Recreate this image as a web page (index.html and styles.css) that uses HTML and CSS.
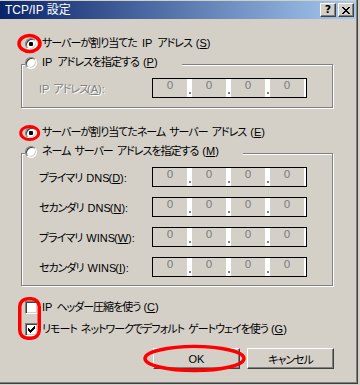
FILE: index.html
```html
<!DOCTYPE HTML>
<html lang="ja">
  <head>
    <title>TCP/IP 設定</title>
    <meta charset="utf-8">
    <link rel="stylesheet" href="styles.css">
  </head>
  <body>

  <div class="window">
    <div class="titlebar">
      <span class="title">TCP/IP 設定</span>
      <div class="caption-buttons">
        <span class="cbtn help">?</span>
        <span class="cbtn">
          <svg width="8" height="7" viewBox="0 0 8 7"><path fill="#000" d="M0 0h2v1H0zM6 0h2v1H6zM1 1h2v1H1zM5 1h2v1H5zM2 2h4v1H2zM3 3h2v1H3zM2 4h4v1H2zM1 5h2v1H1zM5 5h2v1H5zM0 6h2v1H0zM6 6h2v1H6z"/></svg>
        </span>
      </div>
    </div>

    <div class="content">
      <label class="option first"><span class="radio checked"></span>サーバーが割り当てた <span class="lat">IP</span> アドレス<span class="key">(<u>S</u>)</span></label>

      <fieldset class="group">
        <legend><label class="option"><span class="radio"></span><span class="lat">IP</span> アドレスを指定する<span class="key">(<u>P</u>)</span></label></legend>
        <div class="group-inner one">
          <div class="field-row">
            <span class="field-label disabled"><span class="lat">IP</span> アドレス<span class="key">(<u>A</u>):</span></span>
            <div class="ip">
              <span class="seg">0</span><span class="gap"><i></i></span><span class="seg">0</span><span class="gap"><i></i></span><span class="seg">0</span><span class="gap"><i></i></span><span class="seg">0</span>
            </div>
          </div>
        </div>
      </fieldset>

      <label class="option spaced"><span class="radio checked"></span>サーバーが割り当てたネーム サーバー アドレス<span class="key">(<u>E</u>)</span></label>

      <fieldset class="group">
        <legend><label class="option"><span class="radio"></span>ネーム サーバー アドレスを指定する<span class="key">(<u>M</u>)</span></label></legend>
        <div class="group-inner two">
          <div class="field-row">
            <span class="field-label">プライマリ <span class="lat">DNS</span><span class="key">(<u>D</u>):</span></span>
            <div class="ip">
              <span class="seg">0</span><span class="gap"><i></i></span><span class="seg">0</span><span class="gap"><i></i></span><span class="seg">0</span><span class="gap"><i></i></span><span class="seg">0</span>
            </div>
          </div>
          <div class="field-row">
            <span class="field-label">セカンダリ <span class="lat">DNS</span><span class="key">(<u>N</u>):</span></span>
            <div class="ip">
              <span class="seg">0</span><span class="gap"><i></i></span><span class="seg">0</span><span class="gap"><i></i></span><span class="seg">0</span><span class="gap"><i></i></span><span class="seg">0</span>
            </div>
          </div>
          <div class="field-row">
            <span class="field-label">プライマリ <span class="lat">WINS</span><span class="key">(<u>W</u>):</span></span>
            <div class="ip">
              <span class="seg">0</span><span class="gap"><i></i></span><span class="seg">0</span><span class="gap"><i></i></span><span class="seg">0</span><span class="gap"><i></i></span><span class="seg">0</span>
            </div>
          </div>
          <div class="field-row">
            <span class="field-label">セカンダリ <span class="lat">WINS</span><span class="key">(<u>I</u>):</span></span>
            <div class="ip">
              <span class="seg">0</span><span class="gap"><i></i></span><span class="seg">0</span><span class="gap"><i></i></span><span class="seg">0</span><span class="gap"><i></i></span><span class="seg">0</span>
            </div>
          </div>
        </div>
      </fieldset>

      <div class="checks">
        <label class="option"><span class="checkbox"></span><span class="lat">IP</span> ヘッダー圧縮を使う<span class="key">(<u>C</u>)</span></label>
        <label class="option"><span class="checkbox"><svg width="7" height="7" viewBox="0 0 7 7"><path fill="#000" d="M6 0h1v1H6zM5 1h2v1H5zM0 2h1v1H0zM4 2h3v1H4zM0 3h2v1H0zM3 3h3v1H3zM0 4h5v1H0zM1 5h3v1H1zM2 6h1v1H2z"/></svg></span>リモート ネットワークでデフォルト ゲートウェイを使う<span class="key">(<u>G</u>)</span></label>
      </div>

      <div class="buttons">
        <span class="btn default"><span class="lat">OK</span></span>
        <span class="btn">キャンセル</span>
      </div>
    </div>

    <!-- red annotation marks drawn over the dialog -->
    <svg class="marks" width="358" height="384" viewBox="0 0 358 384">
      <g fill="none" stroke="#ff0000">
        <ellipse cx="29.5" cy="43.5" rx="10.5" ry="8" stroke-width="3.5"/>
        <ellipse cx="29.7" cy="133" rx="9" ry="6.5" stroke-width="3"/>
        <rect x="19.75" y="298.75" width="19.5" height="39.5" rx="8" stroke-width="3.5"/>
        <ellipse cx="194.5" cy="358.5" rx="49.5" ry="12" stroke-width="3.5"/>
      </g>
    </svg>
  </div>

  </body>
</html>
```

FILE: styles.css
```css
  body {
    margin: 0;
    padding: 0;
    background: #d4d0c8;
    font-family: "Liberation Sans", "Noto Sans CJK JP", sans-serif;
    font-size: 11px;
    color: #000;
    text-autospace: no-autospace;
  }

  .window {
    position: relative;
    width: 358px;
    height: 384px;
    box-sizing: border-box;
    padding-top: 1px;
    background: #d4d0c8;
    border-right: 1px solid #404040;
    border-bottom: 1px solid #404040;
    box-shadow: inset -1px -1px #808080;
    font-feature-settings: "palt";
    letter-spacing: -1px;
    word-spacing: 2px;
  }

  .titlebar {
    height: 18px;
    margin-right: 1px;
    padding: 0 2px 0 5px;
    display: flex;
    align-items: center;
    justify-content: space-between;
    background: linear-gradient(to right, #0a246a, #a6caf0);
    color: #fff;
    letter-spacing: 0;
    word-spacing: 0;
  }
  .title {
    font-size: 12px;
    line-height: 18px;
  }
  .caption-buttons {
    display: flex;
    gap: 2px;
  }
  .cbtn {
    width: 16px;
    height: 14px;
    box-sizing: border-box;
    display: flex;
    align-items: center;
    justify-content: center;
    background: #d4d0c8;
    border: 1px solid;
    border-color: #fff #404040 #404040 #fff;
    box-shadow: inset -1px -1px #808080;
  }
  .cbtn.help {
    color: #000;
    font: bold 11px "DejaVu Sans", sans-serif;
    line-height: 12px;
  }

  .content {
    width: 313px;
    padding-left: 21px;
  }

  .lat, .key {
    letter-spacing: 0;
  }
  .key {
    margin-left: -1px;
    font-family: "Liberation Sans", sans-serif;
    font-feature-settings: normal;
  }

  .option {
    display: flex;
    align-items: center;
    gap: 5px;
    height: 13px;
    line-height: 13px;
    margin-left: 4px;
    white-space: nowrap;
  }
  .option.first {
    margin-top: 18px;
  }
  .option.spaced {
    margin-top: 18px;
  }

  .radio {
    width: 12px;
    height: 12px;
    box-sizing: border-box;
    flex: none;
    display: flex;
    align-items: center;
    justify-content: center;
    border-radius: 50%;
    background: #fff;
    border: 1px solid;
    border-color: #808080 #fff #fff #808080;
    box-shadow: inset 1px 1px #404040, inset -1px -1px #d4d0c8;
  }
  .radio.checked::after {
    content: "";
    width: 4px;
    height: 4px;
    border-radius: 1px;
    background: #000;
  }

  .checkbox {
    width: 13px;
    height: 13px;
    box-sizing: border-box;
    flex: none;
    display: flex;
    align-items: center;
    justify-content: center;
    background: #fff;
    border: 1px solid;
    border-color: #808080 #fff #fff #808080;
    box-shadow: inset 1px 1px #404040, inset -1px -1px #d4d0c8;
  }

  .group {
    width: 312px;
    box-sizing: border-box;
    margin: 6px 0 0;
    padding: 0;
    border: 1px solid #808080;
    box-shadow: 1px 1px #fff, inset 1px 1px #fff;
  }
  .group legend {
    margin-left: 3px;
    padding: 0 24px 4px 0;
    background: #d4d0c8;
  }
  .group legend .option {
    margin-left: 0;
  }

  .group-inner.one {
    padding: 5px 0 9px 17px;
  }
  .group-inner.two {
    padding: 5px 0 8px 17px;
    display: flex;
    flex-direction: column;
    gap: 10px;
  }

  .field-row {
    display: flex;
    align-items: center;
    height: 20px;
  }
  .field-label {
    flex: 0 0 113px;
    white-space: nowrap;
  }
  .disabled {
    color: #808080;
    text-shadow: 1px 1px #fff;
  }

  .ip {
    width: 155px;
    height: 20px;
    box-sizing: border-box;
    display: flex;
    border: 1px solid #000;
    background: #fff;
    letter-spacing: 0;
  }
  .seg {
    width: 34px;
    background: #d4d0c8;
    color: #808080;
    font: 11px "DejaVu Sans", sans-serif;
    line-height: 14px;
    text-align: center;
  }
  .gap {
    width: 5px;
    display: flex;
    align-items: flex-end;
    justify-content: center;
    padding-bottom: 3px;
    box-sizing: border-box;
  }
  .gap i {
    width: 2px;
    height: 2px;
    background: #808080;
  }

  .checks {
    margin-top: 15px;
    display: flex;
    flex-direction: column;
    gap: 9px;
  }
  .checks .option {
    gap: 4px;
  }

  .buttons {
    margin-top: 12px;
    display: flex;
    justify-content: flex-end;
    gap: 7px;
  }
  .btn {
    width: 87px;
    height: 21px;
    box-sizing: border-box;
    display: flex;
    align-items: center;
    justify-content: center;
    background: #d4d0c8;
    border: 1px solid;
    border-color: #fff #404040 #404040 #fff;
    box-shadow: inset -1px -1px #808080;
  }

  .marks {
    position: absolute;
    top: 0;
    left: 0;
    pointer-events: none;
  }
```
